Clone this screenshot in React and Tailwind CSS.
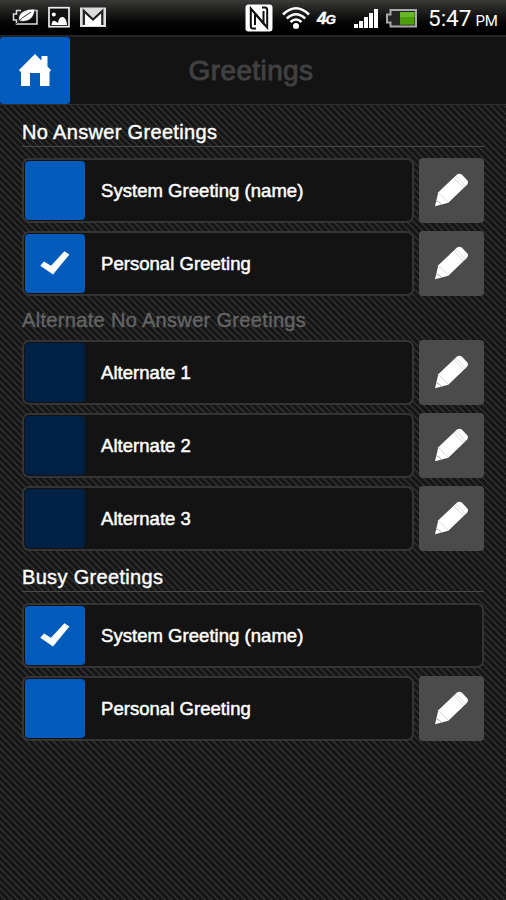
const stripes =
  "bg-[repeating-linear-gradient(45deg,#161616_0px,#161616_2.6px,#343434_3.4px,#343434_3.9px,#161616_4.714px)]";

function Check() {
  return (
    <svg className="h-[59px] w-[60px]" viewBox="0 0 60 59">
      <path d="M15.3 31.7 L19 27.6 L26 31.8 L39.4 17.2 L44.4 20.4 L28 40.6 Z" fill="#fff" />
    </svg>
  );
}

function Pencil() {
  return (
    <svg className="h-[65px] w-[65px]" viewBox="0 0 65 65">
      <path d="M16 48.3 L19.3 34.3 L38 16.6 Q40.5 14.6 43 16.8 L48.2 22.3 Q50 24.8 47.8 27 L29.3 44.8 Z" fill="#fff" />
      <path d="M35 20 L44.8 30 M36.8 18.2 L46.7 28.2 M20 35 L29 44" stroke="#c8c8c8" strokeWidth="0.7" fill="none" />
      <path d="M17.5 43 Q21 43.5 22 46.5" stroke="#999" strokeWidth="0.8" fill="none" />
    </svg>
  );
}

function Row({ label, checked, dim, noEdit }) {
  return (
    <div className="flex h-[65px] gap-[5px]">
      <div className="flex min-w-0 flex-1 items-center rounded-[7px] border-2 border-[#343434] bg-[#131313] pl-[1px]">
        <div className={`h-[59px] w-[60px] shrink-0 rounded-[4px] ${dim ? "bg-[#002146]" : "bg-[#005bbb]"}`}>
          {checked && <Check />}
        </div>
        <span className="ml-4 pt-[2px] text-[18.5px] leading-none tracking-[0.04px] whitespace-nowrap text-white [-webkit-text-stroke:0.5px_#fff]">
          {label}
        </span>
      </div>
      {!noEdit && (
        <button className="h-[65px] w-[65px] shrink-0 rounded-[4px] bg-[#4b4b4b]">
          <Pencil />
        </button>
      )}
    </div>
  );
}

function StatusBar() {
  return (
    <div className="flex h-[35px] items-center bg-gradient-to-b from-[#3a3a38] to-black text-white">
      <svg className="h-[35px] w-[110px] shrink-0" viewBox="0 0 110 35">
        <path d="M21 10.5 H16.5 V14 H13.5 V20 H16.5 V24 H37 V10.5 H34" fill="none" stroke="#ddd" strokeWidth="1.5" />
        <path d="M19 21 C17 12 26 9 35 9 C34 16 31 23 19 21 Z" fill="#fff" stroke="#222" strokeWidth="0.6" />
        <path d="M16 24 Q22 17 31 12" stroke="#333" strokeWidth="1" fill="none" />
        <rect x="49" y="7.7" width="20" height="19" fill="#111" stroke="#eee" strokeWidth="1.7" />
        <path d="M51.5 25 Q52 20 55 21 L58 23 Q59 16 63 17 Q66.5 18 67 25 Z" fill="#fff" />
        <circle cx="53.8" cy="14.5" r="2" fill="#fff" />
        <rect x="80" y="7.5" width="26" height="19.5" fill="#ddd" />
        <path d="M82.5 9 L93 18 L103.5 9 V26 H82.5 Z" fill="#fff" />
        <path d="M83.8 25 V11 L93 19.5 L102.3 11 V25" fill="none" stroke="#222" strokeWidth="2.3" />
      </svg>
      <svg className="ml-auto h-[35px] w-[180px] shrink-0" viewBox="240 0 180 35">
        <rect x="245.5" y="4.5" width="27" height="27" rx="3" fill="#fff" />
        <path d="M256 28.5 H253 Q250.8 28.5 250.8 26 V8.5 L263.5 23.5 V11" fill="none" stroke="#111" strokeWidth="2" />
        <path d="M262 7.5 H265 Q267.2 7.5 267.2 10 V27.5 L255 13.5 V25" fill="none" stroke="#111" strokeWidth="2" />
        <g fill="none" stroke="#fff" strokeWidth="2.6">
          <path d="M283 14.5 Q296 2 309 14.5" />
          <path d="M286.8 18.5 Q296 10 305.2 18.5" />
          <path d="M290.5 22 Q296 17 301.5 22" />
        </g>
        <circle cx="296" cy="26" r="3" fill="#fff" />
        <text x="317" y="24" fontSize="17" fontWeight="700" fontStyle="italic" fill="#fff" stroke="#fff" strokeWidth="0.4">4</text>
        <text x="325.5" y="23.5" fontSize="13.5" fontWeight="700" fontStyle="italic" fill="#fff" stroke="#fff" strokeWidth="0.3">G</text>
        <path d="M354 24h4v4h-4z M359 21h4v7h-4z M364 17h4v11h-4z M369 13h4v15h-4z M374 9h4v19h-4z" fill="#fff" />
        <path d="M390.5 10 H416 V26.5 H390.5 V22.5 H387 V14.5 H390.5 Z" fill="#252525" stroke="#aaa" strokeWidth="2" />
        <rect x="400" y="12" width="14.5" height="12.7" fill="#4c9e0c" />
        <rect x="400" y="12" width="14.5" height="5" fill="#66b82a" />
      </svg>
      <div className="flex w-[86px] shrink-0 items-baseline gap-1 pt-[2px] pl-2 font-[Roboto] whitespace-nowrap">
        <span className="text-[22.5px] leading-none">5:47</span>
        <span className="text-[15px] leading-none">PM</span>
      </div>
    </div>
  );
}

function Heading({ children, className }) {
  return (
    <h2 className={`text-[20px] leading-[22px] font-normal tracking-[0.33px] whitespace-nowrap ${className}`}>
      {children}
    </h2>
  );
}

export default function App() {
  return (
    <div className={`flex h-[900px] w-[506px] flex-col overflow-hidden font-['Liberation_Sans',Arial,sans-serif] ${stripes}`}>
      <StatusBar />
      <header className="flex h-[70px] shrink-0 border-t-2 border-b border-t-[#242424] border-b-[#303030] bg-[#131313]">
        <button className="h-[67px] w-[70px] shrink-0 rounded-[3px] bg-[#005bbb]">
          <svg className="h-[67px] w-[70px]" viewBox="0 37 70 67">
            <path d="M19 70 L35 54 L41.5 60.5 V56 H47.5 V66.5 L51 70 L50 71.5 H49.5 V86 H40 V73 H30 V86 H21 V71.5 H20 Z" fill="#fff" />
          </svg>
        </button>
        <h1 className="flex-1 pt-[17px] pr-[74px] text-center text-[28px] leading-[34px] tracking-[0.4px] text-[#414141] [-webkit-text-stroke:0.9px_#414141]">
          Greetings
        </h1>
      </header>
      <main className="flex flex-col px-[22px]">
        <Heading className="mt-[16px] text-white [-webkit-text-stroke:0.4px_#fff]">No Answer Greetings</Heading>
        <div className="mt-[3px] mb-[11px] h-px bg-[#484848]" />
        <div className="flex flex-col gap-2">
          <Row label="System Greeting (name)" />
          <Row label="Personal Greeting" checked />
        </div>
        <Heading className="mt-[13px] mb-[9px] text-[#646464] [-webkit-text-stroke:0.4px_#646464]">Alternate No Answer Greetings</Heading>
        <div className="flex flex-col gap-2">
          <Row label="Alternate 1" dim />
          <Row label="Alternate 2" dim />
          <Row label="Alternate 3" dim />
        </div>
        <Heading className="mt-[15px] text-white [-webkit-text-stroke:0.4px_#fff]">Busy Greetings</Heading>
        <div className="mt-[3px] mb-[11px] h-px bg-[#484848]" />
        <div className="flex flex-col gap-2">
          <Row label="System Greeting (name)" checked noEdit />
          <Row label="Personal Greeting" />
        </div>
      </main>
    </div>
  );
}
